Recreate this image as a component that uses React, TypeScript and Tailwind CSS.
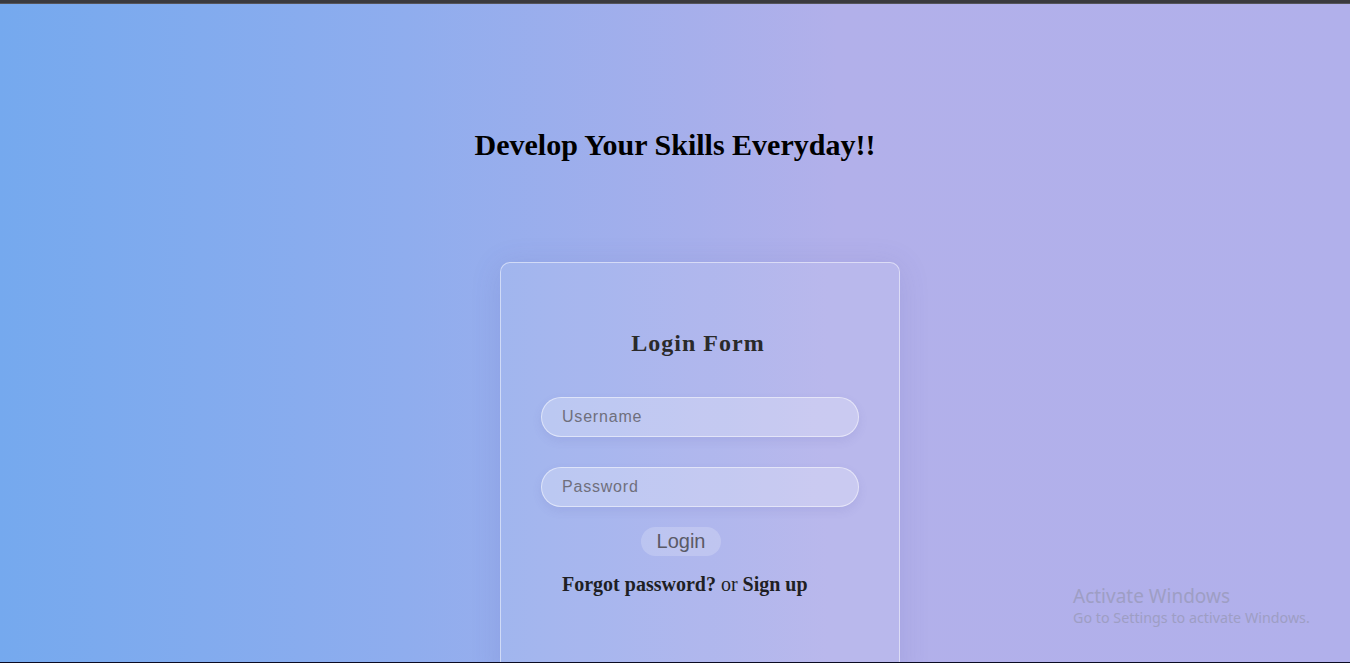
export default function App() {
  return (
    <div className="relative h-[663px] w-[1350px] overflow-hidden bg-[linear-gradient(90deg,#75a9ee_0%,#8fadee_30%,#b2b0ea_62%,#b1b0eb_100%)]">
      <div className="h-[4px] w-full border-b border-[#55555a] bg-[#3a3a3e]" />
      <div className="flex flex-col items-center">
        <h1 className="mt-[121px] font-['Liberation_Serif',serif] text-[30px] font-bold leading-[40px] text-black">
          Develop Your Skills Everyday!!
        </h1>
        <div className="ml-[50px] mt-[97px] flex h-[420px] w-[400px] flex-col items-center rounded-[10px] border border-white/50 bg-white/10 shadow-[0_4px_30px_rgba(80,80,160,0.15)]">
          <h2 className="mr-[4px] mt-[64px] font-['Liberation_Serif',serif] text-[24px] font-bold leading-[32px] tracking-[1px] text-[#2a2a2a]">
            Login Form
          </h2>
          <input
            type="text"
            placeholder="Username"
            className="mt-[38px] h-[40px] w-[318px] rounded-full border border-white/50 bg-white/25 pl-[20px] font-['Liberation_Sans',Arial,sans-serif] text-[16px] tracking-[0.8px] text-[#444] shadow-[0_4px_10px_rgba(90,90,170,0.12)] outline-none placeholder:text-[#6f6f7c]"
          />
          <input
            type="password"
            placeholder="Password"
            className="mt-[30px] h-[40px] w-[318px] rounded-full border border-white/50 bg-white/25 pl-[20px] font-['Liberation_Sans',Arial,sans-serif] text-[16px] tracking-[0.8px] text-[#444] shadow-[0_4px_10px_rgba(90,90,170,0.12)] outline-none placeholder:text-[#6f6f7c]"
          />
          <div className="mt-[20px] flex w-[318px]">
            <button className="ml-[100px] h-[29px] w-[80px] rounded-full bg-white/20 font-['Liberation_Sans',Arial,sans-serif] text-[20px] leading-[29px] text-[#5a5a66]">
              Login
            </button>
          </div>
          <p className="mt-[14px] w-[318px] pl-[21px] font-['Liberation_Serif',serif] text-[20px] leading-[28px] text-[#1f1f24]">
            <span className="font-bold">Forgot password?</span> or{" "}
            <span className="font-bold">Sign up</span>
          </p>
        </div>
      </div>
      <div className="absolute left-[1073px] top-[584px] font-['Noto_Sans','Open_Sans',sans-serif] text-[#9e9ec4]">
        <div className="text-[19px] leading-[24px]">Activate Windows</div>
        <div className="text-[14.3px] leading-[20px]">Go to Settings to activate Windows.</div>
      </div>
      <div className="absolute bottom-0 left-0 h-[1px] w-full bg-[#0a0a22]" />
    </div>
  );
}
